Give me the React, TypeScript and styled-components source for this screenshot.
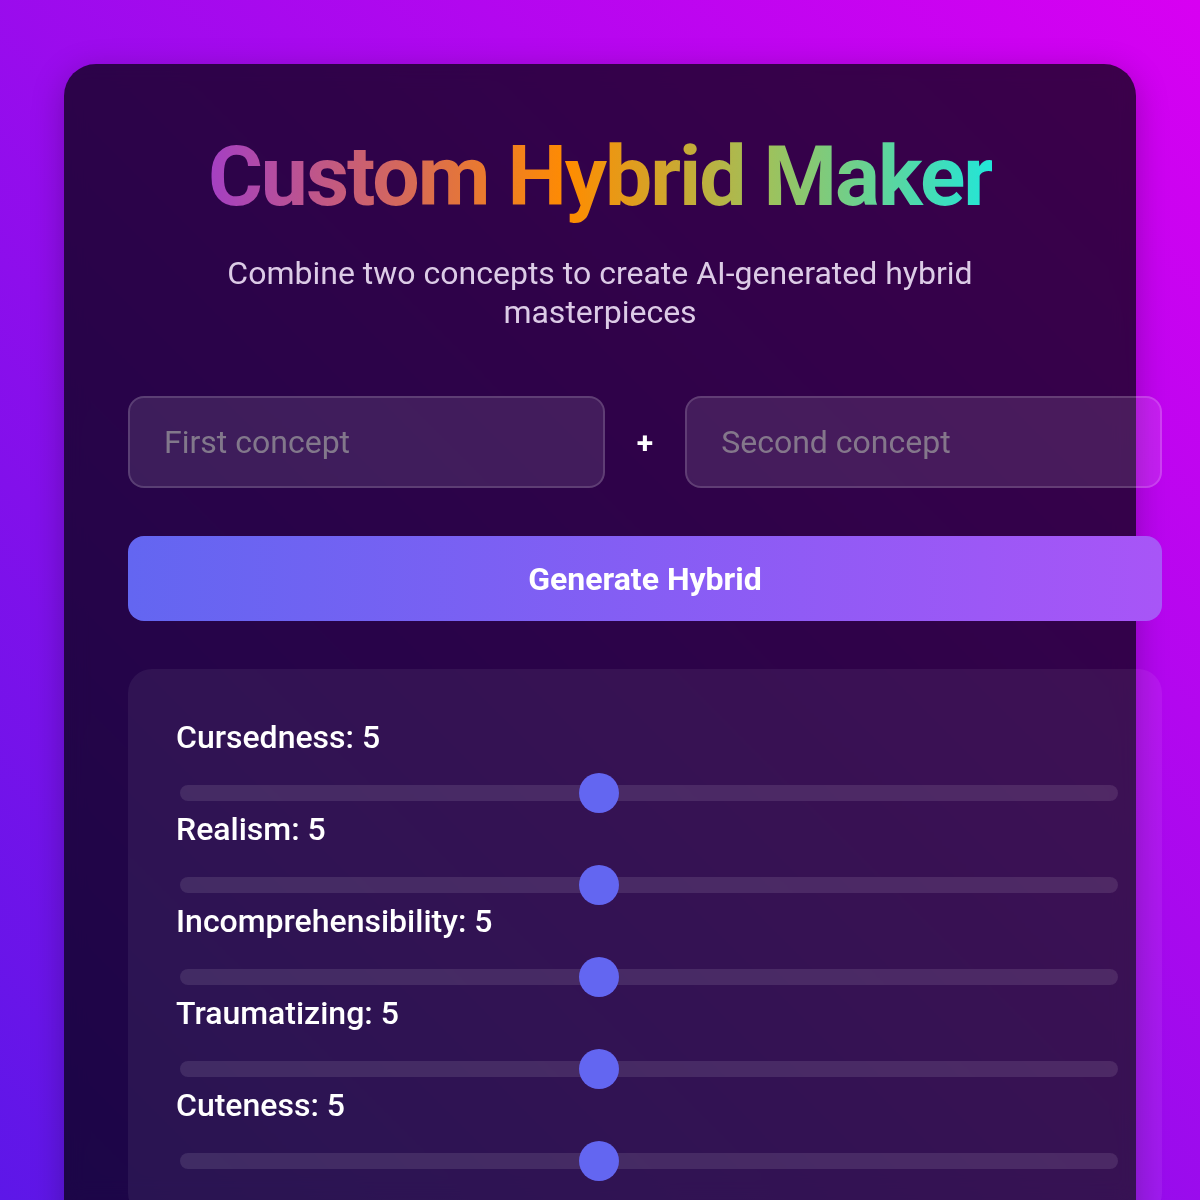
import React, { useState } from 'react';
import styled, { createGlobalStyle } from 'styled-components';

const GlobalStyle = createGlobalStyle`
  html, body {
    margin: 0;
    padding: 0;
  }

  body {
    min-height: 100vh;
    background: linear-gradient(45deg, #5d17e8 0%, #d800f2 100%);
    background-attachment: fixed;
    font-family: Roboto, 'Noto Sans', 'Liberation Sans', sans-serif;
    color: #fff;
  }
`;

const Page = styled.div`
  padding: 64px;
`;

const Card = styled.div`
  box-sizing: border-box;
  width: 1072px;
  padding: 63px 64px 64px;
  border-radius: 32px;
  background: rgba(2, 0, 10, 0.72);
  backdrop-filter: blur(10px);
  box-shadow: 0 8px 32px rgba(0, 0, 0, 0.25);
`;

const Title = styled.h1`
  width: fit-content;
  margin: 0 auto;
  font-size: 84px;
  font-weight: 700;
  line-height: normal;
  letter-spacing: -2px;
  text-align: center;
  background: linear-gradient(90deg, #a43fc4 0%, #ff8c00 46%, #9cc25e 72%, #22e6d8 100%);
  -webkit-background-clip: text;
  background-clip: text;
  color: transparent;
`;

const Subtitle = styled.p`
  max-width: 800px;
  margin: 28px auto 0;
  font-size: 32px;
  line-height: 39px;
  text-align: center;
  color: #dccbe6;
`;

const Controls = styled.div`
  width: calc(100% + 90px);
  margin-top: 64px;
  display: flex;
  flex-direction: column;
  gap: 48px;
`;

const InputRow = styled.div`
  display: flex;
  align-items: center;
  gap: 32px;
`;

const ConceptInput = styled.input`
  flex: 1;
  min-width: 0;
  box-sizing: border-box;
  height: 92px;
  padding: 0 34px;
  border: 2px solid rgba(255, 255, 255, 0.15);
  border-radius: 16px;
  background: rgba(255, 255, 255, 0.1);
  font-family: inherit;
  font-size: 32px;
  color: #fff;
  outline: none;

  &::placeholder {
    color: rgba(160, 160, 160, 0.7);
  }
`;

const Plus = styled.span`
  font-size: 30px;
  font-weight: 700;
  color: #fff;
`;

const GenerateButton = styled.button`
  height: 85px;
  border: none;
  border-radius: 16px;
  background: linear-gradient(90deg, #6366f1 0%, #a855f7 100%);
  font-family: inherit;
  font-size: 32px;
  font-weight: 700;
  color: #fff;
  cursor: pointer;
`;

const SliderPanel = styled.div`
  padding: 48px 44px 48px 48px;
  border-radius: 24px;
  background: rgba(255, 255, 255, 0.06);
  display: flex;
  flex-direction: column;
  gap: 8px;
`;

const SliderRow = styled.div`
  display: flex;
  flex-direction: column;
`;

const SliderLabel = styled.label`
  font-size: 32px;
  font-weight: 500;
  line-height: 40px;
  color: #fff;
`;

const Range = styled.input`
  -webkit-appearance: none;
  appearance: none;
  width: calc(100% - 4px);
  height: 16px;
  margin: 28px 0 0 4px;
  border-radius: 8px;
  background: rgba(255, 255, 255, 0.1);
  outline: none;

  &::-webkit-slider-thumb {
    -webkit-appearance: none;
    appearance: none;
    width: 40px;
    height: 40px;
    border-radius: 50%;
    background: #6366f1;
    cursor: pointer;
  }

  &::-moz-range-thumb {
    width: 40px;
    height: 40px;
    border: none;
    border-radius: 50%;
    background: #6366f1;
  }
`;

const traits = ['Cursedness', 'Realism', 'Incomprehensibility', 'Traumatizing', 'Cuteness'];

const App = () => {
  const [values, setValues] = useState<Record<string, number>>(
    Object.fromEntries(traits.map((t) => [t, 5]))
  );

  return (
    <>
      <GlobalStyle />
      <Page>
        <Card>
          <Title>Custom Hybrid Maker</Title>
          <Subtitle>Combine two concepts to create AI-generated hybrid masterpieces</Subtitle>
          <Controls>
            <InputRow>
              <ConceptInput placeholder="First concept" />
              <Plus>+</Plus>
              <ConceptInput placeholder="Second concept" />
            </InputRow>
            <GenerateButton type="button">Generate Hybrid</GenerateButton>
            <SliderPanel>
              {traits.map((trait) => (
                <SliderRow key={trait}>
                  <SliderLabel>
                    {trait}: {values[trait]}
                  </SliderLabel>
                  <Range
                    type="range"
                    min={1}
                    max={10}
                    value={values[trait]}
                    onChange={(e) => setValues({ ...values, [trait]: Number(e.target.value) })}
                  />
                </SliderRow>
              ))}
            </SliderPanel>
          </Controls>
        </Card>
      </Page>
    </>
  );
};

export default App;
